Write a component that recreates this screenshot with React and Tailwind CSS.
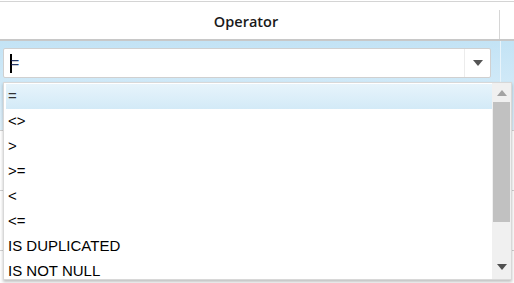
const OPERATORS = ['=', '<>', '>', '>=', '<', '<=', 'IS DUPLICATED', 'IS NOT NULL']

function Triangle({ up, className }) {
  return (
    <svg width="10" height="6" viewBox="0 0 10 6" className={className}>
      {up ? <path d="M0 6 L5 0 L10 6 Z" fill="currentColor" /> : <path d="M0 0 L10 0 L5 6 Z" fill="currentColor" />}
    </svg>
  )
}

function OperatorList() {
  return (
    <div className="absolute left-[3px] top-[82px] flex h-[198px] w-[509px] border border-[#d8d8d8] bg-white shadow-[0_2px_3px_rgba(0,0,0,0.25)]">
      <ul className="flex-1 overflow-hidden pl-[2px] pt-[1px] font-['Liberation_Sans',Arial,sans-serif] text-[15px] text-black">
        {OPERATORS.map((op, i) => (
          <li
            key={op}
            className={
              i === 0
                ? 'flex h-[25px] items-center bg-gradient-to-b from-[#e7f4fb] to-[#d3eaf7] pl-[2px] text-[#333]'
                : 'flex h-[25px] items-center pl-[2px]'
            }
          >
            {op}
          </li>
        ))}
      </ul>
      <div className="flex w-[19px] flex-col items-center bg-[#f0f0f0]">
        <div className="flex h-[19px] items-center justify-center text-[#a3a3a3]">
          <Triangle up />
        </div>
        <div className="h-[120px] w-[17px] bg-[#c1c1c1]" />
        <div className="flex-1" />
        <div className="flex h-[24px] items-center justify-center text-[#505050]">
          <Triangle />
        </div>
      </div>
    </div>
  )
}

export default function App() {
  return (
    <div className="relative h-[283px] w-[514px] overflow-hidden bg-white font-['Open_Sans',sans-serif]">
      <div className="mt-px flex h-[40px] border-y border-t-[#d4d4d4] border-b-[#c8c8c8] border-b-2">
        <div className="flex w-[499px] items-center justify-center pr-[7px] pt-[2px] text-[14.5px] font-semibold text-[#1a1a1a]">
          Operator
        </div>
        <div className="mt-[8px] w-px bg-[#d6d6d6]" />
      </div>

      <div className="flex h-[90px] border-b border-[#d0d0d0] bg-gradient-to-b from-[#c3e3f5] to-[#dff0fa]">
        <div className="w-[500px] px-[3px] pt-[7px]">
          <div className="flex h-[30px] w-[488px] items-center rounded-[2px] border border-[#d0d0d0] bg-white">
            <div className="flex flex-1 items-center pl-[6px]">
              <span className="h-[19px] w-[2px] bg-black" />
              <span className="ml-[-1px] font-['Liberation_Sans',Arial,sans-serif] text-[14px] text-[#2a3a66]">=</span>
            </div>
            <div className="flex h-full w-[26px] items-center justify-center border-l border-[#ececec] text-[#555]">
              <Triangle />
            </div>
          </div>
        </div>
        <div className="w-px bg-[#e8f4fb]" />
      </div>
      <div className="h-[60px] border-b border-[#d0d0d0]" />
      <div className="h-[60px] border-b border-[#d0d0d0]" />

      <OperatorList />
    </div>
  )
}
